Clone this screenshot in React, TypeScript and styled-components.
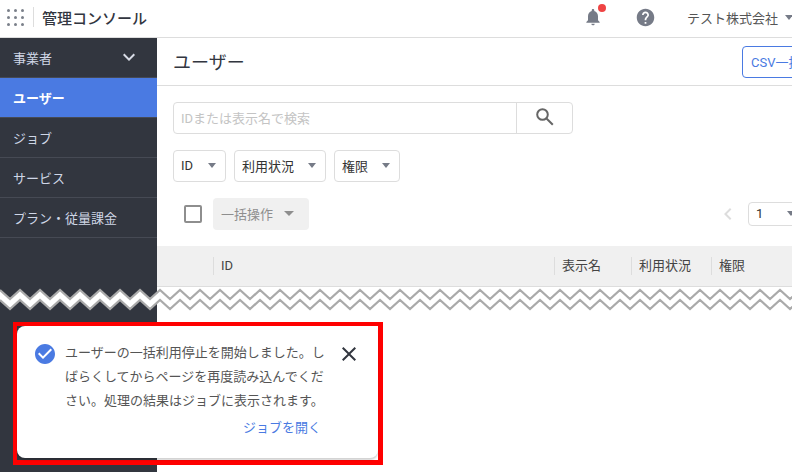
import React from "react";
import styled, { createGlobalStyle } from "styled-components";
import { MdNotifications, MdHelp, MdCheckCircle, MdClose, MdExpandMore, MdChevronLeft } from "react-icons/md";

const Global = createGlobalStyle`
  html, body { margin: 0; padding: 0; background: #fff; }
  body { font-family: Roboto, "Noto Sans CJK JP", sans-serif; }
  * { box-sizing: border-box; }
`;

const Page = styled.div`
  position: relative;
  width: 792px;
  height: 472px;
  overflow: hidden;
  display: flex;
  flex-direction: column;
  color: #333;
`;

const Header = styled.header`
  flex: 0 0 38px;
  display: flex;
  align-items: center;
  border-bottom: 1px solid #ddd;
  padding: 0 0 3px 7px;
  background: #fff;
`;

const AppGrid = styled.div`
  display: grid;
  grid-template-columns: repeat(3, 3px);
  gap: 4px;
  margin-right: 9px;
  span { width: 3px; height: 3px; border-radius: 50%; background: #7b808a; }
`;

const Divider = styled.div`
  width: 1px;
  height: 20px;
  background: #ddd;
  margin-right: 8px;
`;

const AppTitle = styled.div`
  font-size: 15px;
  font-weight: 500;
  color: #32363f;
  flex: 1;
`;

const BellWrap = styled.div`
  position: relative;
  width: 18px;
  height: 20px;
  margin-right: 34px;
  color: #767b87;
  svg { display: block; }
  &::after {
    content: "";
    position: absolute;
    top: -3px;
    right: -5px;
    width: 8px;
    height: 8px;
    border-radius: 50%;
    background: #ef4444;
  }
`;

const Help = styled.div`
  display: flex;
  color: #767b87;
  margin-right: 31px;
`;

const Company = styled.div`
  display: flex;
  align-items: center;
  gap: 4px;
  font-size: 13px;
  color: #555;
  width: 105px;
  flex-shrink: 0;
  white-space: nowrap;
`;

const Caret = styled.span<{ $c?: string; $ml?: number; $half?: number }>`
  display: inline-block;
  width: 0;
  height: 0;
  border-left: ${p => p.$half ?? 4.5}px solid transparent;
  border-right: ${p => p.$half ?? 4.5}px solid transparent;
  border-top: 5px solid ${p => p.$c ?? "#767b87"};
  margin-left: ${p => p.$ml ?? 0}px;
  flex-shrink: 0;
`;

const Body = styled.div`
  flex: 1;
  display: flex;
  min-height: 0;
`;

const Sidebar = styled.nav`
  flex: 0 0 157px;
  background: #32363f;
`;

const NavItem = styled.div<{ $active?: boolean }>`
  height: 40px;
  display: flex;
  align-items: center;
  justify-content: space-between;
  padding: 0 16px 1px 13px;
  font-size: 13px;
  font-weight: ${p => (p.$active ? 700 : 400)};
  color: ${p => (p.$active ? "#fff" : "#cfd6e6")};
  background: ${p => (p.$active ? "#4a7ae2" : "transparent")};
  border-bottom: 1px solid #464a54;
  svg { color: #d8dce6; }
`;

const Main = styled.main`
  width: 700px;
  flex-shrink: 0;
`;

const TitleBar = styled.div`
  height: 48px;
  display: flex;
  align-items: center;
  justify-content: space-between;
  padding: 0 16px;
  border-bottom: 1px solid #ddd;
`;

const PageTitle = styled.h1`
  margin: 0 0 2px;
  font-size: 18px;
  font-weight: 400;
  color: #32363f;
`;

const OutlineButton = styled.button`
  width: 99px;
  height: 32px;
  background: #fff;
  border: 1px solid #4a7ae2;
  border-radius: 4px;
  color: #4a7ae2;
  font: inherit;
  font-size: 13px;
  text-align: left;
  padding: 0 8px;
  white-space: nowrap;
  overflow: hidden;
`;

const Content = styled.div`
  padding: 16px 16px 0;
  display: flex;
  flex-direction: column;
  gap: 16px;
`;

const SearchBox = styled.div`
  width: 400px;
  height: 32px;
  display: flex;
  border: 1px solid #ddd;
  border-radius: 4px;
`;

const SearchInput = styled.div`
  flex: 1;
  display: flex;
  align-items: center;
  padding: 0 0 2px 7px;
  font-size: 13px;
  color: #c4c4c4;
`;

const SearchButton = styled.div`
  width: 56px;
  display: flex;
  align-items: center;
  justify-content: center;
  padding-bottom: 3px;
  border-left: 1px solid #ddd;
  color: #666;
`;

const FilterRow = styled.div`
  display: flex;
  gap: 8px;
`;

const Select = styled.div<{ $w: number }>`
  width: ${p => p.$w}px;
  height: 32px;
  display: flex;
  align-items: center;
  justify-content: space-between;
  padding: 0 9px 2px 7px;
  border: 1px solid #ddd;
  border-radius: 4px;
  font-size: 13px;
  color: #333;
`;

const BulkRow = styled.div`
  height: 32px;
  display: flex;
  align-items: center;
  padding-left: 11px;
`;

const Checkbox = styled.div`
  width: 18px;
  height: 18px;
  border: 2px solid #8e8e8e;
  border-radius: 2px;
  margin-right: 11px;
`;

const BulkButton = styled.div`
  width: 96px;
  height: 32px;
  display: flex;
  align-items: center;
  padding: 0 0 2px 8px;
  gap: 11px;
  border-radius: 4px;
  background: #f0f0f0;
  color: #8e8e8e;
  font-size: 13px;
`;

const Pager = styled.div`
  margin-left: auto;
  margin-right: 36px;
  display: flex;
  align-items: center;
  color: #ddd;
`;

const PagerPrev = styled.div`
  display: flex;
  margin-right: 8px;
`;

const PagerSelect = styled(Select)`
  height: 24px;
`;

const TableHead = styled.div`
  margin: 0 -16px;
  height: 41px;
  display: grid;
  grid-template-columns: 56px 341px 77px 80px 1fr;
  align-items: center;
  background: #f0f0f0;
  border-bottom: 1px solid #ddd;
  font-size: 13px;
  color: #444;
`;

const HeadCell = styled.div`
  height: 18px;
  line-height: 18px;
  padding-left: 7px;
  border-left: 1px solid #ddd;
`;

const HeadSpacer = styled.div``;

const Zigzag = styled.svg`
  position: absolute;
  left: 0;
  top: 286px;
  display: block;
`;

const Highlight = styled.div`
  position: absolute;
  left: 13px;
  top: 322px;
  width: 370px;
  height: 143px;
  border: 4px solid #ff0000;
  border-bottom-width: 5px;
  border-right-width: 5px;
`;

const Toast = styled.div`
  width: 361px;
  height: 132px;
  background: #fff;
  border-radius: 8px;
  box-shadow: 0 2px 2px rgba(0, 0, 0, 0.18);
  padding: 16px 16px 0 16px;
  display: grid;
  grid-template-columns: 32px 1fr 28px;
  align-content: start;
`;

const ToastIcon = styled.div`
  color: #4a7ae2;
  display: flex;
`;

const ToastText = styled.div`
  font-size: 13px;
  line-height: 24px;
  color: #555;
  margin-top: -1px;
  width: 264px;
`;

const ToastClose = styled.div`
  display: flex;
  color: #32363f;
  margin-left: 3px;
`;

const ToastLink = styled.div`
  grid-column: 2;
  font-size: 13px;
  color: #4a7ae2;
  text-align: right;
  margin-top: 4px;
  width: 256px;
`;

const period = 20;
const line = (dy: number) => {
  const pts: string[] = [];
  for (let x = 0; x <= 800; x += period / 2) {
    pts.push(`${x},${(x % period === 0 ? 4 : 13) + dy}`);
  }
  return pts;
};

const nav = ["ユーザー", "ジョブ", "サービス", "プラン・従量課金"];

export default function App() {
  const top = line(0);
  const bottom = line(10);
  const band = [...top, ...[...bottom].reverse()].join(" ");
  return (
    <Page>
      <Global />
      <Header>
        <AppGrid>
          {Array.from({ length: 9 }, (_, i) => <span key={i} />)}
        </AppGrid>
        <Divider />
        <AppTitle>管理コンソール</AppTitle>
        <BellWrap><MdNotifications size={20} /></BellWrap>
        <Help><MdHelp size={21} /></Help>
        <Company>テスト株式会社<Caret $ml={3} /></Company>
      </Header>
      <Body>
        <Sidebar>
          <NavItem>事業者<MdExpandMore size={24} /></NavItem>
          {nav.map((n, i) => <NavItem key={n} $active={i === 0}>{n}</NavItem>)}
        </Sidebar>
        <Main>
          <TitleBar>
            <PageTitle>ユーザー</PageTitle>
            <OutlineButton>CSV一括操作</OutlineButton>
          </TitleBar>
          <Content>
            <SearchBox>
              <SearchInput>IDまたは表示名で検索</SearchInput>
              <SearchButton>
                <svg width="18" height="18" viewBox="0 0 18 18" fill="none" stroke="currentColor" strokeWidth="2">
                  <circle cx="6.5" cy="6.5" r="5.3" />
                  <path d="M10.5 10.5 L16.8 16.8" />
                </svg>
              </SearchButton>
            </SearchBox>
            <FilterRow>
              <Select $w={53}>ID<Caret /></Select>
              <Select $w={92}>利用状況<Caret /></Select>
              <Select $w={66}>権限<Caret /></Select>
            </FilterRow>
            <BulkRow>
              <Checkbox />
              <BulkButton>一括操作<Caret $c="#8e8e8e" $half={5} /></BulkButton>
              <Pager>
                <PagerPrev><MdChevronLeft size={24} /></PagerPrev>
                <PagerSelect $w={57}>1<Caret /></PagerSelect>
              </Pager>
            </BulkRow>
            <TableHead>
              <HeadSpacer />
              <HeadCell>ID</HeadCell>
              <HeadCell>表示名</HeadCell>
              <HeadCell>利用状況</HeadCell>
              <HeadCell>権限</HeadCell>
            </TableHead>
          </Content>
        </Main>
      </Body>
      <Zigzag width="792" height="30" viewBox="0 0 792 30">
        <polygon points={band} fill="#fff" />
        <polyline points={top.join(" ")} fill="none" stroke="#aaa" strokeWidth="2.2" />
        <polyline points={bottom.join(" ")} fill="none" stroke="#aaa" strokeWidth="2.2" />
      </Zigzag>
      <Highlight>
        <Toast>
          <ToastIcon><MdCheckCircle size={24} /></ToastIcon>
          <ToastText>ユーザーの一括利用停止を開始しました。しばらくしてからページを再度読み込んでください。処理の結果はジョブに表示されます。</ToastText>
          <ToastClose><MdClose size={24} /></ToastClose>
          <ToastLink>ジョブを開く</ToastLink>
        </Toast>
      </Highlight>
    </Page>
  );
}
